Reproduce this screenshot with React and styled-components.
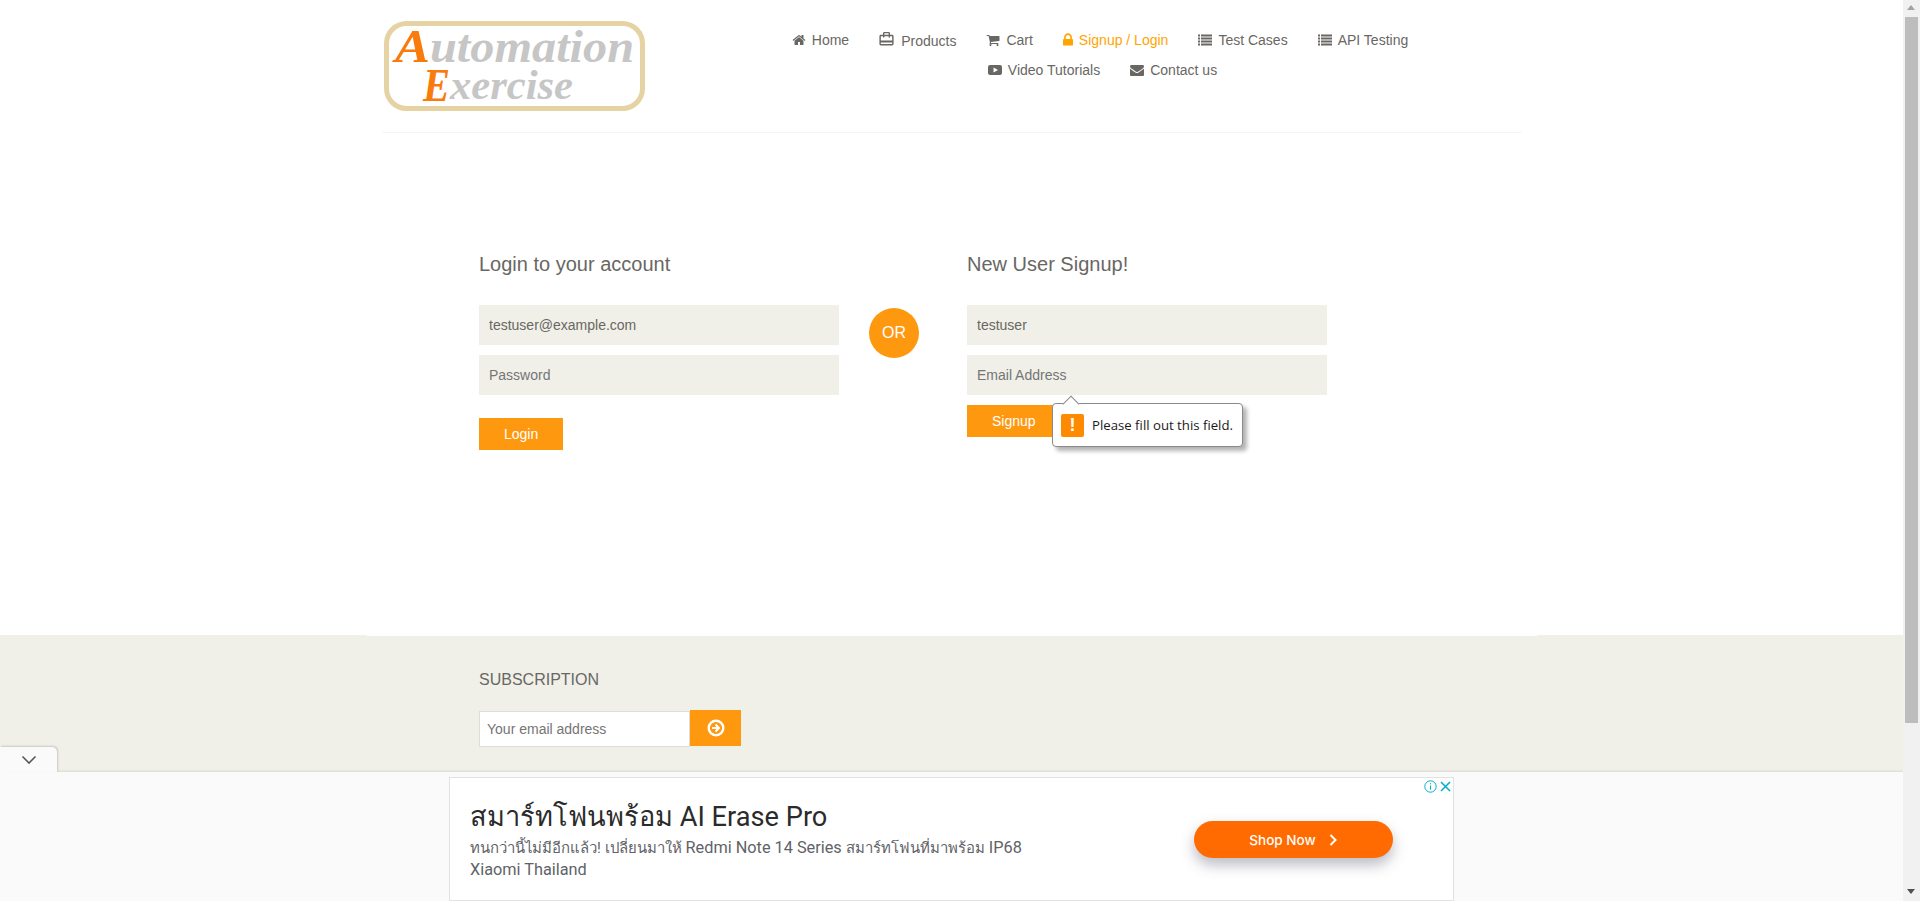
import React from 'react'
import styled, { createGlobalStyle } from 'styled-components'
import { MdCardTravel } from 'react-icons/md'

const HOME = 'M1472 992v480q0 26-19 45t-45 19h-384v-384h-256v384h-384q-26 0-45-19t-19-45v-480q0-1 .5-3t.5-3l575-474 575 474q1 2 1 6zm223-69l-62 74q-8 9-21 11h-3q-13 0-21-7l-692-577-692 577q-12 8-24 7-13-2-21-11l-62-74q-8-10-7-23.5t11-21.5l719-599q32-26 76-26t76 26l244 204v-195q0-14 9-23t23-9h192q14 0 23 9t9 23v408l219 182q10 8 11 21.5t-7 23.5z'
const CART = 'M704 1536q0 52-38 90t-90 38-90-38-38-90 38-90 90-38 90 38 38 90zm896 0q0 52-38 90t-90 38-90-38-38-90 38-90 90-38 90 38 38 90zm128-1088v512q0 24-16.5 42.5t-40.5 21.5l-1044 122q13 60 13 70 0 16-24 64h920q26 0 45 19t19 45-19 45-45 19h-1024q-26 0-45-19t-19-45q0-11 8-31.5t16-36 21.5-40 15.5-29.5l-177-823h-204q-26 0-45-19t-19-45 19-45 45-19h256q16 0 28.5 6.5t19.5 15.5 13 24.5 8 26 5.5 29.5 4.5 26h1201q26 0 45 19t19 45z'
const LOCK = 'M640 768h512v-192q0-106-75-181t-181-75-181 75-75 181v192zm832 96v576q0 40-28 68t-68 28h-960q-40 0-68-28t-28-68v-576q0-40 28-68t68-28h32v-192q0-184 132-316t316-132 316 132 132 316v192h32q40 0 68 28t28 68z'
const ENVELOPE = 'M1792 710v794q0 66-47 113t-113 47h-1472q-66 0-113-47t-47-113v-794q44 49 101 87 362 246 497 345 57 42 92.5 65.5t94.5 48 110 24.5h2q51 0 110-24.5t94.5-48 92.5-65.5q170-123 498-345 57-39 100-87zm0-294q0 79-49 151t-122 123q-376 261-468 325-10 7-42.5 30.5t-54 38-52 32.5-57.5 27-50 9h-2q-23 0-50-9t-57.5-27-52-32.5-54-38-42.5-30.5q-91-64-262-182.5t-205-142.5q-62-42-117-115.5t-55-136.5q0-78 41.5-130t118.5-52h1472q65 0 112.5 47t47.5 113z'

const Fa = ({ d, view = '0 0 1792 1792', w = 14 }) => (
    <svg width={w} height="14" viewBox={view} fill="currentColor"><path d={d} /></svg>
)

const ListIcon = () => (
    <svg width="14" height="14" viewBox="0 0 14 14" fill="currentColor">
        {[1.5, 4.5, 7.5, 10.5].map(y => (
            <g key={y}>
                <rect x="0" y={y} width="2" height="2" />
                <rect x="3" y={y} width="11" height="2" />
            </g>
        ))}
    </svg>
)

const PlayIcon = () => (
    <svg width="14" height="14" viewBox="0 0 14 14" fill="currentColor">
        <path fillRule="evenodd" d="M2 2h10a2 2 0 0 1 2 2v6a2 2 0 0 1-2 2H2a2 2 0 0 1-2-2V4a2 2 0 0 1 2-2zM5.5 4.4v5.2L10 7z" />
    </svg>
)

const navItems = [
    { label: 'Home', icon: <Fa d={HOME} /> },
    { label: 'Products', icon: <MdCardTravel size={17} />, wide: true },
    { label: 'Cart', icon: <Fa d={CART} /> },
    { label: 'Signup / Login', icon: <Fa d={LOCK} view="320 128 1152 1536" w={10} />, active: true },
    { label: 'Test Cases', icon: <ListIcon /> },
    { label: 'API Testing', icon: <ListIcon /> },
    { label: 'Video Tutorials', icon: <PlayIcon />, indent: true },
    { label: 'Contact us', icon: <Fa d={ENVELOPE} /> },
]

const Logo = () => (
    <LogoSvg width="263" height="92" viewBox="0 0 263 92">
        <rect x="3.5" y="3.5" width="256" height="85" rx="20" fill="#fff" stroke="#e6d3a3" strokeWidth="5" />
        <LogoText x="12" y="42" fontSize="46" fill="#f97b0c" textLength="35" lengthAdjust="spacingAndGlyphs">A</LogoText>
        <LogoText x="47" y="42" fontSize="47" fill="#c6c6c6" textLength="204" lengthAdjust="spacingAndGlyphs">utomation</LogoText>
        <LogoText x="40" y="81" fontSize="46" fill="#f97b0c" textLength="27" lengthAdjust="spacingAndGlyphs">E</LogoText>
        <LogoText x="67" y="79" fontSize="42" fill="#c6c6c6" textLength="123" lengthAdjust="spacingAndGlyphs">xercise</LogoText>
    </LogoSvg>
)

const App = () => {
    return (
        <Shell>
            <GlobalStyle />
            <Page>
                <Container>
                    <Header>
                        <Logo />
                        <Nav>
                            {navItems.map(item => (
                                <NavLink key={item.label} href="#" $active={item.active} $wide={item.wide} $indent={item.indent}>
                                    {item.icon}
                                    <span>{item.label}</span>
                                </NavLink>
                            ))}
                        </Nav>
                    </Header>
                    <FormSection>
                        <FormColumn>
                            <FormTitle>Login to your account</FormTitle>
                            <Field type="email" defaultValue="testuser@example.com" />
                            <Field type="password" placeholder="Password" />
                            <OrangeButton $top={23}>Login</OrangeButton>
                        </FormColumn>
                        <OrBadge>OR</OrBadge>
                        <FormColumn>
                            <FormTitle>New User Signup!</FormTitle>
                            <Field type="text" defaultValue="testuser" />
                            <Field type="email" placeholder="Email Address" />
                            <OrangeButton $top={10}>Signup</OrangeButton>
                            <Bubble>
                                <BubbleIcon>!</BubbleIcon>
                                Please fill out this field.
                            </Bubble>
                        </FormColumn>
                    </FormSection>
                </Container>
                <Footer>
                    <FooterInner>
                        <FooterTitle>SUBSCRIPTION</FooterTitle>
                        <SubscribeRow>
                            <SubscribeInput type="email" placeholder="Your email address" />
                            <SubscribeButton aria-label="subscribe">
                                <svg width="18" height="18" viewBox="0 0 18 18">
                                    <circle cx="9" cy="9" r="7.3" fill="none" stroke="#fff" strokeWidth="2.4" />
                                    <path d="M9.2 4.8 13.4 9l-4.2 4.2-1.4-1.4 1.8-1.8H5V8h4.6L7.8 6.2z" fill="#fff" />
                                </svg>
                            </SubscribeButton>
                        </SubscribeRow>
                    </FooterInner>
                </Footer>
                <AdBar>
                    <AdTab>
                        <svg width="16" height="10" viewBox="0 0 16 10" fill="none" stroke="#555" strokeWidth="1.6">
                            <path d="M1.5 1.5 8 8l6.5-6.5" />
                        </svg>
                    </AdTab>
                    <AdBox>
                        <AdCopy>
                            <AdHeadline>สมาร์ทโฟนพร้อม AI Erase Pro</AdHeadline>
                            <AdText>
                                <ThaiRun>ทนกว่านี้ไม่มีอีกแล้ว! เปลี่ยนมาให้</ThaiRun> Redmi Note 14 Series <ThaiRun>สมาร์ทโฟนที่มาพร้อม</ThaiRun> IP68
                            </AdText>
                            <AdText>Xiaomi Thailand</AdText>
                        </AdCopy>
                        <AdButton>
                            Shop Now
                            <svg width="10" height="12" viewBox="0 0 10 12" fill="none" stroke="#fff" strokeWidth="2">
                                <path d="M2.5 1 7.5 6l-5 5" />
                            </svg>
                        </AdButton>
                        <AdChoices>
                            <svg width="13" height="13" viewBox="0 0 13 13" fill="none" stroke="#00aecd" strokeWidth="1">
                                <circle cx="6.5" cy="6.5" r="5.7" />
                                <path d="M6.5 5.5v4.2M6.5 3.2v1.1" />
                            </svg>
                            <svg width="11" height="11" viewBox="0 0 11 11" fill="none" stroke="#00aecd" strokeWidth="1.5">
                                <path d="M1 1l9 9M10 1l-9 9" />
                            </svg>
                        </AdChoices>
                    </AdBox>
                </AdBar>
            </Page>
            <ScrollTrack>
                <ScrollArrow />
                <ScrollThumb />
                <ScrollArrow $down />
            </ScrollTrack>
        </Shell>
    )
}

export default App


// # Styled-components
const GlobalStyle = createGlobalStyle`
    * {
        box-sizing: border-box;
    }

    body {
        margin: 0;
        background: #fff;
        font-family: "Liberation Sans", Arial, sans-serif;
        color: #696763;
    }

    input::placeholder {
        color: #757575;
        opacity: 1;
    }
`

const Shell = styled.div`
    display: flex;
    height: 100vh;
    overflow: hidden;
`

const Page = styled.div`
    position: relative;
    flex: 1;
    min-width: 0;
    overflow: hidden;
`

const Container = styled.div`
    width: 1170px;
    margin: 0 auto;
    padding: 0 15px;
`

const Header = styled.header`
    display: flex;
    height: 133px;
    padding-top: 20px;
    border-bottom: 1px solid #f5f5f5;
`

const LogoSvg = styled.svg`
    flex: none;
    margin-left: 1.5px;
`

const LogoText = styled.text`
    font-family: "Liberation Serif", serif;
    font-style: italic;
    font-weight: 700;
`

const Nav = styled.nav`
    display: flex;
    flex-wrap: wrap;
    justify-content: center;
    align-content: flex-start;
    gap: 10px 30px;
    width: 640px;
    margin-left: 134px;
    padding-top: 10px;
`

const NavLink = styled.a`
    display: inline-flex;
    align-items: center;
    gap: 6px;
    height: 20px;
    margin-left: ${props => (props.$indent ? '5px' : '0')};
    font-size: 14px;
    line-height: 20px;
    text-decoration: none;
    color: ${props => (props.$active ? '#ffa500' : '#696763')};

    span {
        position: relative;
        top: ${props => (props.$wide ? '1px' : '0')};
    }

    svg {
        flex: none;
        margin-left: ${props => (props.$wide ? '-1px' : '0')};
        transform: translateY(${props => (props.$wide ? '-1.5px' : '0')});
    }
`

const FormSection = styled.section`
    display: flex;
    height: 502px;
    padding: 120px 0 0 97.5px;
`

const FormColumn = styled.div`
    position: relative;
    display: flex;
    flex-direction: column;
    align-items: flex-start;
    width: 360px;
`

const FormTitle = styled.h2`
    margin: 0 0 30px;
    font-size: 20px;
    font-weight: 400;
    line-height: 22px;
    color: #696763;
`

const Field = styled.input`
    width: 100%;
    height: 40px;
    margin-bottom: 10px;
    padding: 0 10px;
    border: 0;
    outline: 0;
    background: #f0f0e9;
    font-family: inherit;
    font-size: 14px;
    color: #696763;
`

const OrangeButton = styled.button`
    height: 32px;
    margin-top: ${props => props.$top - 10}px;
    padding: 0 25px;
    border: 0;
    background: #fe980f;
    color: #fff;
    font-family: inherit;
    font-size: 14px;
`

const OrBadge = styled.div`
    flex: none;
    display: flex;
    align-items: center;
    justify-content: center;
    width: 50px;
    height: 50px;
    margin: 55px 48px 0 30px;
    border-radius: 50%;
    background: #fe980f;
    color: #fff;
    font-size: 16px;
`

const Bubble = styled.div`
    position: absolute;
    left: 85px;
    top: 150px;
    display: flex;
    align-items: center;
    gap: 8px;
    width: 191px;
    height: 44px;
    padding-left: 8px;
    border: 1px solid #8a8a8a;
    border-radius: 4px;
    background: #fff;
    box-shadow: 4px 4px 4px rgba(0, 0, 0, 0.3);
    font-family: "Open Sans", sans-serif;
    font-size: 13.2px;
    color: #1a1a1a;
    white-space: nowrap;

    &::before {
        content: '';
        position: absolute;
        left: 12px;
        top: -6px;
        width: 11px;
        height: 11px;
        border-left: 1px solid #8a8a8a;
        border-top: 1px solid #8a8a8a;
        background: #fff;
        transform: rotate(45deg);
    }
`

const BubbleIcon = styled.span`
    flex: none;
    display: flex;
    align-items: center;
    justify-content: center;
    width: 23px;
    height: 23px;
    border-radius: 2px;
    background: #ff8a00;
    color: #fff;
    font-family: "Liberation Sans", sans-serif;
    font-size: 18px;
    font-weight: 700;
`

const Footer = styled.footer`
    height: 400px;
    background: #f0f0e9;
`

const FooterInner = styled.div`
    width: 1170px;
    height: 100%;
    margin: 0 auto;
    padding: 35px 0 0 112.5px;
    border-top: 1px solid #fff;
`

const FooterTitle = styled.h2`
    margin: 0 0 21px;
    font-size: 16px;
    font-weight: 400;
    line-height: 18px;
    color: #696763;
`

const SubscribeRow = styled.div`
    display: flex;
    align-items: flex-start;
`

const SubscribeInput = styled.input`
    width: 211px;
    height: 36px;
    margin-top: 1px;
    padding: 0 7px;
    border: 1px solid #ddd;
    outline: 0;
    background: #fff;
    font-family: inherit;
    font-size: 14px;
`

const SubscribeButton = styled.button`
    display: flex;
    align-items: center;
    justify-content: center;
    width: 51px;
    height: 36px;
    padding: 0;
    border: 0;
    background: #fe980f;
`

const AdBar = styled.div`
    position: absolute;
    left: 0;
    right: 0;
    bottom: 0;
    height: 129px;
    padding-top: 5px;
    background: #fafafa;
    box-shadow: 0 -1px 2px rgba(0, 0, 0, 0.1);
`

const AdTab = styled.div`
    position: absolute;
    left: 0;
    top: -25px;
    display: flex;
    align-items: center;
    justify-content: center;
    width: 57px;
    height: 25px;
    border-top-right-radius: 5px;
    background: #fafafa;
    box-shadow: 1px -1px 2px rgba(0, 0, 0, 0.16);
`

const AdBox = styled.div`
    position: relative;
    display: flex;
    width: 1005px;
    height: 124px;
    margin-left: 449px;
    padding: 23px 0 0 20px;
    border: 1px solid #e2e2e2;
    background: #fff;
`

const AdCopy = styled.div`
    width: 724px;
`

const AdHeadline = styled.div`
    margin-bottom: 4px;
    font-family: Roboto, "Noto Sans", "DejaVu Sans", sans-serif;
    font-size: 27.2px;
    line-height: 32px;
    color: #2b2b2b;
`

const AdText = styled.div`
    font-family: Roboto, "Noto Sans", "DejaVu Sans", sans-serif;
    font-size: 16.3px;
    line-height: 21px;
    color: #5f6368;
`

const ThaiRun = styled.span`
    font-size: 14.9px;
`

const AdButton = styled.button`
    display: flex;
    align-items: center;
    justify-content: center;
    gap: 12px;
    width: 199px;
    height: 37px;
    margin-top: 20px;
    border: 0;
    border-radius: 18.5px;
    background: #ff6b00;
    box-shadow: 0 7px 14px rgba(60, 64, 90, 0.35);
    color: #fff;
    font-family: Inter, sans-serif;
    font-size: 13.5px;
    font-weight: 500;
`

const AdChoices = styled.div`
    position: absolute;
    top: 2px;
    right: 2px;
    display: flex;
    align-items: center;
    gap: 3px;
`

const ScrollTrack = styled.div`
    flex: none;
    display: flex;
    flex-direction: column;
    width: 17px;
    background: #f1f1f1;
`

const ScrollArrow = styled.div`
    flex: none;
    height: 17px;
    position: relative;

    &::after {
        content: '';
        position: absolute;
        left: 4px;
        top: 5px;
        border-left: 4.5px solid transparent;
        border-right: 4.5px solid transparent;
        ${props => (props.$down
            ? 'border-top: 5px solid #505050;'
            : 'border-bottom: 5px solid #a3a3a3;')}
    }
`

const ScrollThumb = styled.div`
    flex: none;
    width: 13px;
    height: 706px;
    margin: 0 2px 161px;
    background: #bdbdbd;
`
